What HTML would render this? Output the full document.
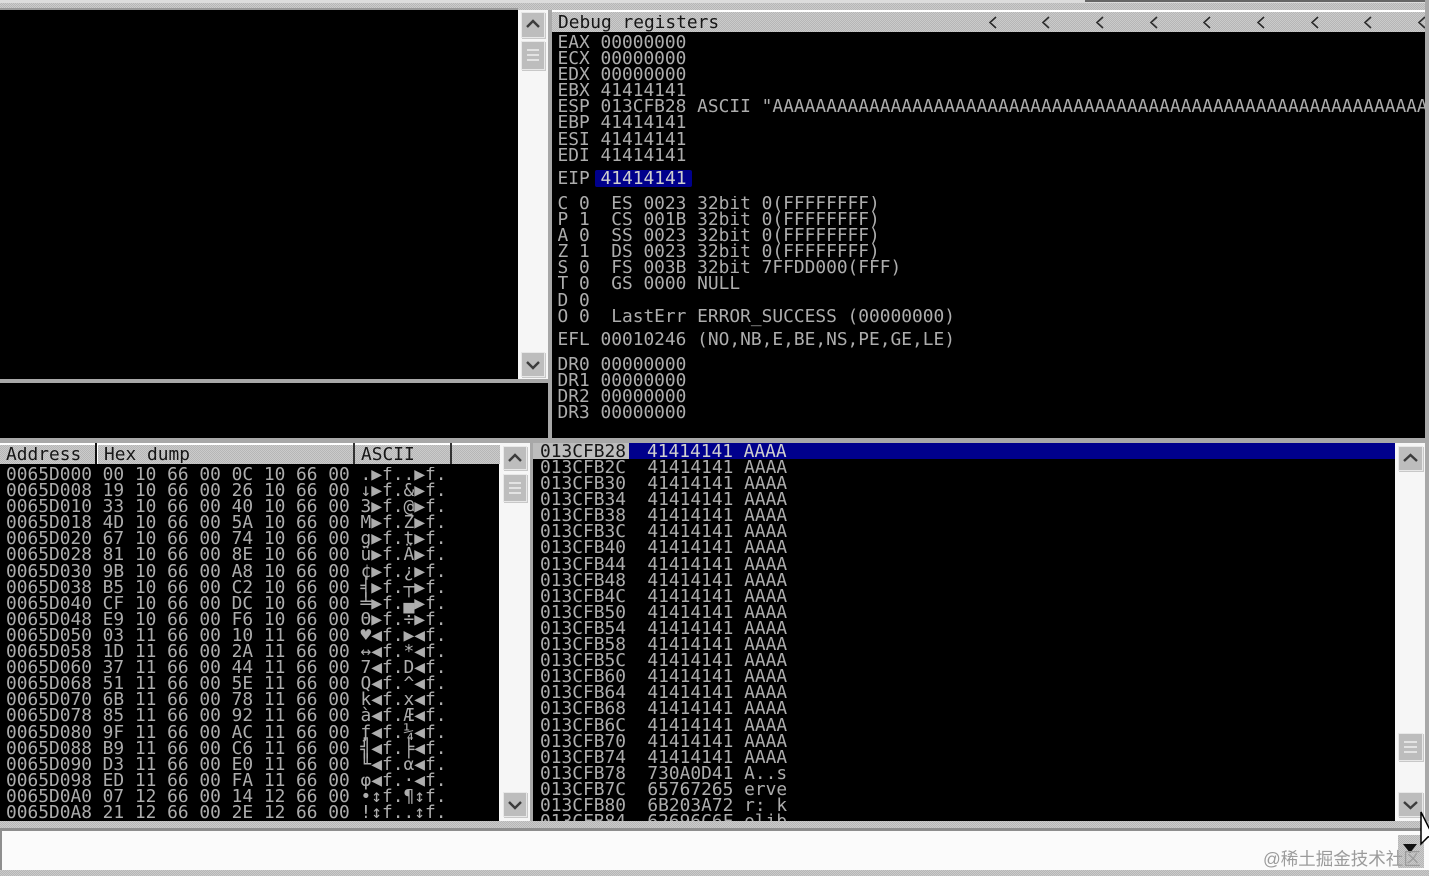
<!DOCTYPE html>
<html lang="en"><head><meta charset="utf-8"><title>Debugger</title>
<style>
html,body{margin:0;padding:0;background:#fff}
#r{position:relative;width:1429px;height:876px;overflow:hidden;background:#f6f6f6}
.a{position:absolute}
.k{background:#000}
pre{position:absolute;margin:0;font:17.85px/16.1px "DejaVu Sans Mono","Liberation Mono",monospace;color:#adadad;white-space:pre;overflow:hidden}
.d{color:#161616}
.g{background:repeating-conic-gradient(#b6b6b6 0 25%,#cbcbcb 0 50%) 0 0/2px 2px}
.bt{position:absolute;background:#bdbdbd;border:1px solid #e8e8e8;box-sizing:border-box;box-shadow:1px 1px 0 #c8c8c8}
svg{position:absolute;overflow:visible}
</style></head><body><div id="r">

<!-- top strips -->
<div class="a" style="left:0;top:0;width:1429px;height:3px;background:#dcdcdc"></div>
<div class="a" style="left:1085px;top:0;width:344px;height:2px;background:#666"></div>
<div class="a g" style="left:0;top:3px;width:1429px;height:7px"></div>
<div class="a" style="left:0;top:8px;width:518px;height:2px;background:#999"></div>

<!-- top-left pane -->
<div class="a k" style="left:0;top:10px;width:518px;height:369px"></div>
<div class="a" style="left:0;top:379px;width:548px;height:4px;background:#a8a8a8"></div>
<div class="a k" style="left:0;top:383px;width:548px;height:55px"></div>

<!-- scrollbar top -->
<div class="bt" style="left:521px;top:12px;width:24px;height:26px"></div>
<svg style="left:521px;top:12px" width="24" height="26"><path d="M6 15 L12 9 L18 15" fill="none" stroke="#3c3c3c" stroke-width="2.4"/></svg>
<div class="bt" style="left:521px;top:41px;width:24px;height:29px"></div>
<svg style="left:521px;top:41px" width="24" height="29" ><path d="M6 9H18M6 14H18M6 19H18" stroke="#f0f0f0" stroke-width="1.5"/></svg>
<div class="bt" style="left:521px;top:352px;width:24px;height:25px"></div>
<svg style="left:521px;top:352px" width="24" height="25"><path d="M6 10 L12 16 L18 10" fill="none" stroke="#3c3c3c" stroke-width="2.4"/></svg>

<!-- register pane -->
<div class="a" style="left:548px;top:10px;width:4px;height:428px;background:#a8a8a8"></div>
<div class="a" style="left:552px;top:10px;width:873px;height:2px;background:#fff"></div>
<div class="a g" style="left:552px;top:12px;width:873px;height:20px"></div>
<pre class="d" style="left:558px;top:15px;width:871px;height:17px">Debug registers</pre>
<svg style="left:0;top:0" width="1429" height="40"><path d="M996 17L990 22.500L996 28M1049 17L1043 22.500L1049 28M1103 17L1097 22.500L1103 28M1157 17L1151 22.500L1157 28M1210 17L1204 22.500L1210 28M1264 17L1258 22.500L1264 28M1318 17L1312 22.500L1318 28M1371 17L1365 22.500L1371 28M1425 17L1419 22.500L1425 28" fill="none" stroke="#2a2a2a" stroke-width="1.6"/></svg>
<div class="a k" style="left:552px;top:32px;width:873px;height:406px"></div>
<div class="a" style="left:1425px;top:0;width:4px;height:443px;background:#a8a8a8"></div>

<pre style="left:557.500px;top:35px;width:867px;height:132px">EAX 00000000
ECX 00000000
EDX 00000000
EBX 41414141
ESP 013CFB28 ASCII "AAAAAAAAAAAAAAAAAAAAAAAAAAAAAAAAAAAAAAAAAAAAAAAAAAAAAAAAAAAAAAAAAAAAAAAAAAAA
EBP 41414141
ESI 41414141
EDI 41414141</pre>
<pre style="left:557.500px;top:171px">EIP</pre>
<div class="a" style="left:595px;top:170px;width:97px;height:17px;background:#00008c;border-radius:2px"></div>
<pre style="left:600.500px;top:171px;color:#d0d0d0">41414141</pre>
<pre style="left:557.500px;top:196px;padding-bottom:5px">C 0  ES 0023 32bit 0(FFFFFFFF)
P 1  CS 001B 32bit 0(FFFFFFFF)
A 0  SS 0023 32bit 0(FFFFFFFF)
Z 1  DS 0023 32bit 0(FFFFFFFF)
S 0  FS 003B 32bit 7FFDD000(FFF)
T 0  GS 0000 NULL
D 0
O 0  LastErr ERROR_SUCCESS (00000000)</pre>
<pre style="left:557.500px;top:332px">EFL 00010246 (NO,NB,E,BE,NS,PE,GE,LE)</pre>
<pre style="left:557.500px;top:357px">DR0 00000000
DR1 00000000
DR2 00000000
DR3 00000000</pre>

<!-- divider -->
<div class="a" style="left:0;top:438px;width:1429px;height:5px;background:#a8a8a8"></div>

<!-- dump header -->
<div class="a" style="left:0;top:443px;width:500px;height:21px;background:#fff"></div>
<div class="a g" style="left:0;top:445px;width:95px;height:19px"></div>
<div class="a" style="left:95px;top:443px;width:2px;height:21px;background:#111"></div>
<div class="a g" style="left:98px;top:445px;width:255px;height:19px"></div>
<div class="a" style="left:353px;top:443px;width:2px;height:21px;background:#333"></div>
<div class="a g" style="left:355px;top:445px;width:95px;height:19px"></div>
<div class="a" style="left:450px;top:443px;width:2px;height:21px;background:#333"></div>
<div class="a g" style="left:452px;top:445px;width:48px;height:19px"></div>
<pre class="d" style="left:6px;top:447px">Address</pre>
<pre class="d" style="left:104px;top:447px">Hex dump</pre>
<pre class="d" style="left:361px;top:447px">ASCII</pre>

<!-- dump -->
<div class="a k" style="left:0;top:464px;width:499px;height:357px"></div>
<pre style="left:6px;top:467px;width:490px;height:354px">0065D000 00 10 66 00 0C 10 66 00 .▶f..▶f.
0065D008 19 10 66 00 26 10 66 00 ↓▶f.&amp;▶f.
0065D010 33 10 66 00 40 10 66 00 3▶f.@▶f.
0065D018 4D 10 66 00 5A 10 66 00 M▶f.Z▶f.
0065D020 67 10 66 00 74 10 66 00 g▶f.t▶f.
0065D028 81 10 66 00 8E 10 66 00 ü▶f.Ä▶f.
0065D030 9B 10 66 00 A8 10 66 00 ¢▶f.¿▶f.
0065D038 B5 10 66 00 C2 10 66 00 ╡▶f.┬▶f.
0065D040 CF 10 66 00 DC 10 66 00 ╧▶f.▄▶f.
0065D048 E9 10 66 00 F6 10 66 00 Θ▶f.÷▶f.
0065D050 03 11 66 00 10 11 66 00 ♥◀f.▶◀f.
0065D058 1D 11 66 00 2A 11 66 00 ↔◀f.*◀f.
0065D060 37 11 66 00 44 11 66 00 7◀f.D◀f.
0065D068 51 11 66 00 5E 11 66 00 Q◀f.^◀f.
0065D070 6B 11 66 00 78 11 66 00 k◀f.x◀f.
0065D078 85 11 66 00 92 11 66 00 à◀f.Æ◀f.
0065D080 9F 11 66 00 AC 11 66 00 ƒ◀f.¼◀f.
0065D088 B9 11 66 00 C6 11 66 00 ╣◀f.╞◀f.
0065D090 D3 11 66 00 E0 11 66 00 ╙◀f.α◀f.
0065D098 ED 11 66 00 FA 11 66 00 φ◀f.·◀f.
0065D0A0 07 12 66 00 14 12 66 00 •↕f.¶↕f.
0065D0A8 21 12 66 00 2E 12 66 00 !↕f..↕f.</pre>

<!-- dump scrollbar -->
<div class="bt" style="left:503px;top:446px;width:24px;height:24px"></div>
<svg style="left:503px;top:446px" width="24" height="24"><path d="M6 15 L12 9 L18 15" fill="none" stroke="#3c3c3c" stroke-width="2.4"/></svg>
<div class="bt" style="left:503px;top:474px;width:24px;height:28px"></div>
<svg style="left:503px;top:474px" width="24" height="28"><path d="M6 9H18M6 14H18M6 19H18" stroke="#f0f0f0" stroke-width="1.5"/></svg>
<div class="bt" style="left:503px;top:792px;width:24px;height:25px"></div>
<svg style="left:503px;top:792px" width="24" height="25"><path d="M6 10 L12 16 L18 10" fill="none" stroke="#3c3c3c" stroke-width="2.4"/></svg>

<!-- gutter -->
<div class="a" style="left:530px;top:443px;width:3px;height:378px;background:#a8a8a8"></div>

<!-- stack -->
<div class="a k" style="left:533px;top:443px;width:862px;height:378px"></div>
<div class="a" style="left:533px;top:443px;width:96px;height:16px;background:#bdbdbd"></div>
<div class="a" style="left:629px;top:443px;width:766px;height:16px;background:#00008c"></div>
<pre class="d" style="left:540px;top:443.500px;height:16px">013CFB28</pre>
<pre style="left:647px;top:443.500px;height:16px;color:#d0d0d0">41414141 AAAA</pre>
<pre style="left:540px;top:460px;width:400px;height:361px">013CFB2C  41414141 AAAA
013CFB30  41414141 AAAA
013CFB34  41414141 AAAA
013CFB38  41414141 AAAA
013CFB3C  41414141 AAAA
013CFB40  41414141 AAAA
013CFB44  41414141 AAAA
013CFB48  41414141 AAAA
013CFB4C  41414141 AAAA
013CFB50  41414141 AAAA
013CFB54  41414141 AAAA
013CFB58  41414141 AAAA
013CFB5C  41414141 AAAA
013CFB60  41414141 AAAA
013CFB64  41414141 AAAA
013CFB68  41414141 AAAA
013CFB6C  41414141 AAAA
013CFB70  41414141 AAAA
013CFB74  41414141 AAAA
013CFB78  730A0D41 A..s
013CFB7C  65767265 erve
013CFB80  6B203A72 r: k
013CFB84  62696C6F olib</pre>

<!-- stack scrollbar -->
<div class="bt" style="left:1398px;top:446px;width:25px;height:25px"></div>
<svg style="left:1398px;top:446px" width="25" height="25"><path d="M6 15 L12.500 9 L19 15" fill="none" stroke="#3c3c3c" stroke-width="2.4"/></svg>
<div class="bt" style="left:1398px;top:733px;width:25px;height:28px"></div>
<svg style="left:1398px;top:733px" width="25" height="28"><path d="M6 9H19M6 14H19M6 19H19" stroke="#f0f0f0" stroke-width="1.5"/></svg>
<div class="bt" style="left:1398px;top:792px;width:25px;height:25px"></div>
<svg style="left:1398px;top:792px" width="25" height="25"><path d="M6 10 L12.500 16 L19 10" fill="none" stroke="#3c3c3c" stroke-width="2.4"/></svg>
<div class="a" style="left:1425px;top:443px;width:4px;height:385px;background:#a8a8a8"></div>

<!-- bottom -->
<div class="a g" style="left:0;top:821px;width:1429px;height:7px"></div>
<div class="a" style="left:0;top:828px;width:1429px;height:3px;background:#8e8e8e"></div>
<div class="a" style="left:0;top:831px;width:1429px;height:39px;background:#fbfbfb"></div>
<div class="a" style="left:0;top:831px;width:2px;height:39px;background:#8e8e8e"></div>
<div class="a g" style="left:0;top:870px;width:1429px;height:6px"></div>
<div class="a g" style="left:1398px;top:835px;width:26px;height:33px"></div>
<svg style="left:1398px;top:835px" width="26" height="33"><path d="M5 9H19L12 18Z" fill="#111"/></svg>
<div class="a" style="left:1263px;top:848px;font:17.5px/22px 'Liberation Sans','Noto Sans CJK SC',sans-serif;color:#9b9b9b;white-space:nowrap">@稀土掘金技术社区</div>
<svg style="left:1420px;top:811px" width="12" height="36"><path d="M1 1V33L8 26L13 25Z" fill="#fff" stroke="#000" stroke-width="1.5"/></svg>
</div></body></html>
